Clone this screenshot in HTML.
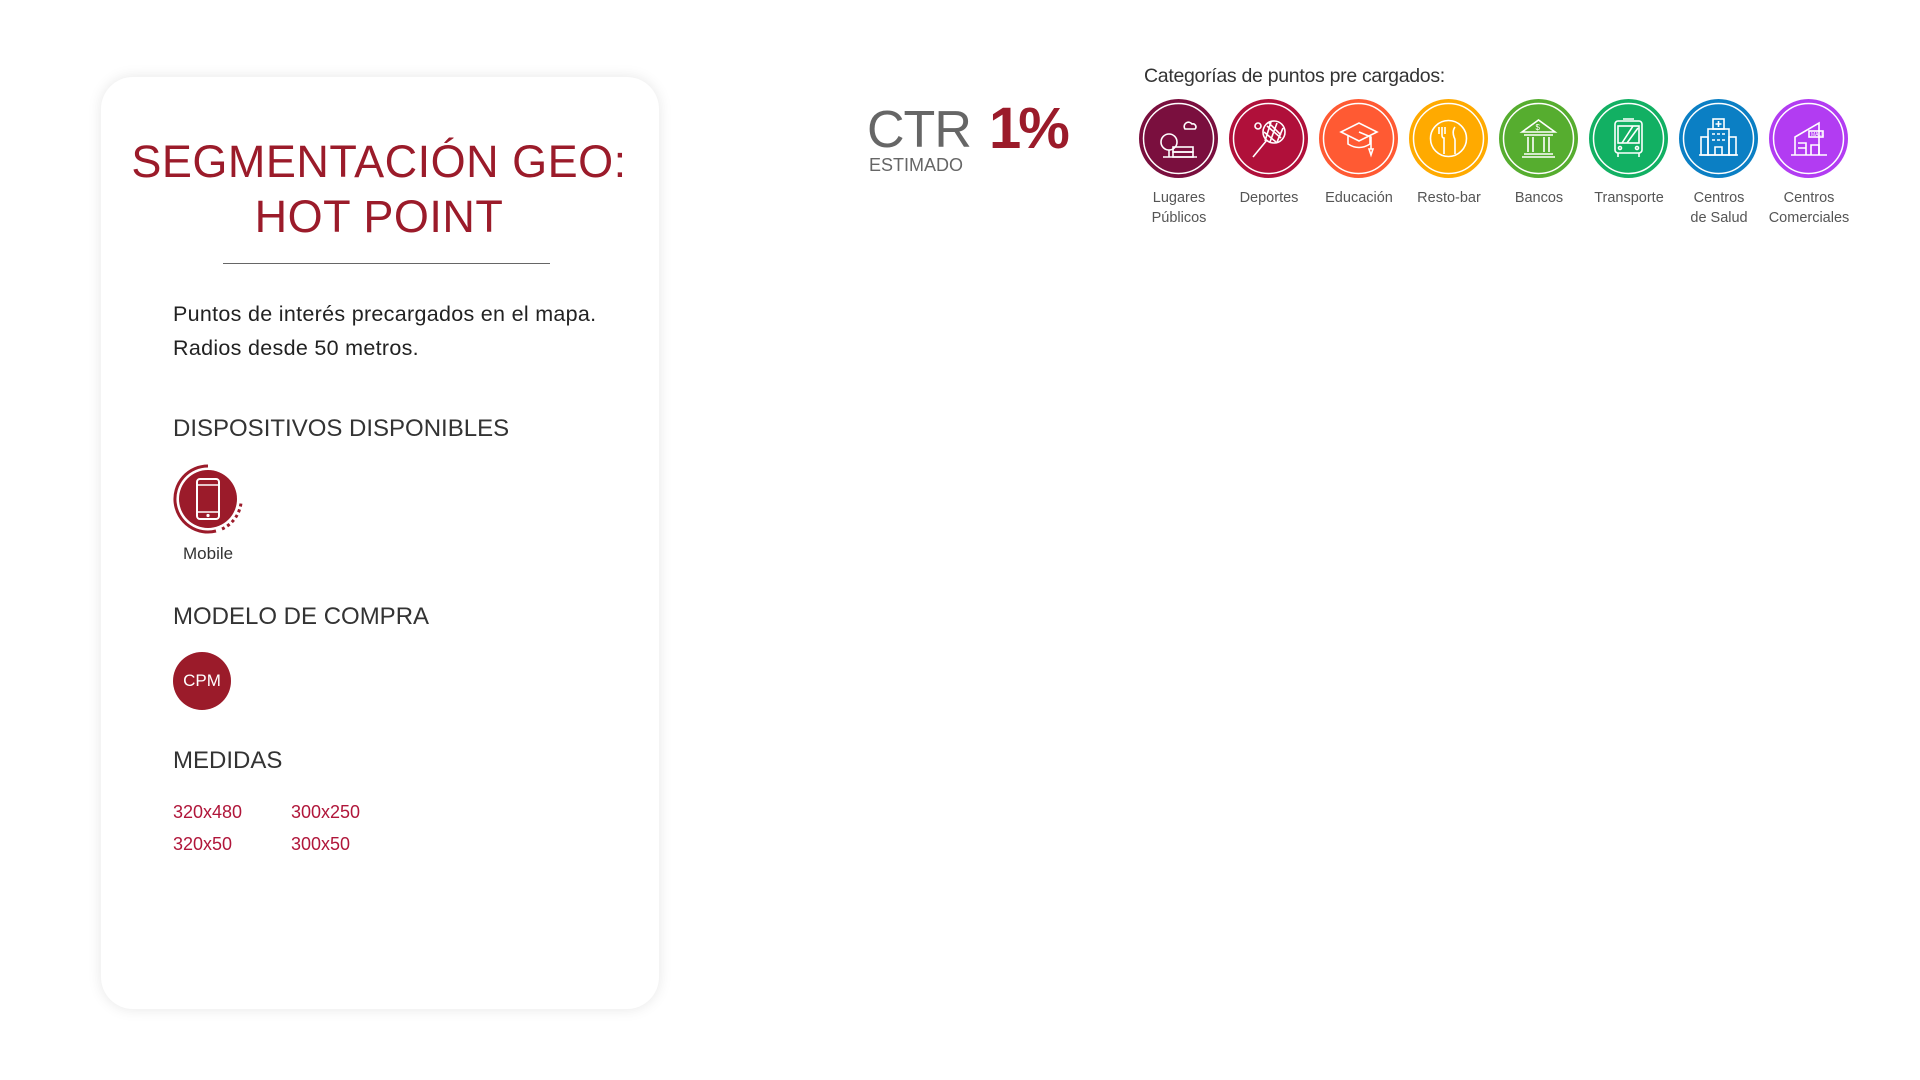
<!DOCTYPE html>
<html><head><meta charset="utf-8"><style>
*{margin:0;padding:0;box-sizing:border-box}
body{width:1920px;height:1080px;background:#fff;font-family:"Liberation Sans",sans-serif;position:relative;overflow:hidden}
.card{position:absolute;left:101px;top:77px;width:558px;height:932px;border-radius:32px;background:#fff;box-shadow:0 0 14px rgba(0,0,0,.10)}
.abs{position:absolute;white-space:nowrap}
.title{left:101px;width:556px;text-align:center;color:#9b1b2a;font-size:45px;letter-spacing:.5px}
.h{left:173px;color:#333;font-size:24px;font-weight:300;letter-spacing:0}
.sz{color:#b0163a;font-size:18px}
.cat{position:absolute;top:99px;width:79px;height:79px;border-radius:50%}
.cat svg{position:absolute;left:0;top:0}
.lbl{position:absolute;top:188px;width:110px;text-align:center;font-size:14.5px;color:#555;line-height:20px}
</style></head><body>
<div class="card"></div>
<div class="abs title" style="top:136px">SEGMENTACIÓN GEO:</div>
<div class="abs title" style="top:191px">HOT POINT</div>
<div class="abs" style="left:223px;top:263px;width:327px;height:1px;background:#666"></div>
<div class="abs" style="left:173px;top:297px;font-size:21.5px;color:#222;line-height:34px;letter-spacing:.3px">Puntos de interés precargados en el mapa.<br>Radios desde 50 metros.</div>
<div class="abs h" style="top:415px">DISPOSITIVOS DISPONIBLES</div>
<svg class="abs" style="left:170px;top:463px" width="80" height="80" viewBox="0 0 80 80">
<circle cx="38" cy="36" r="29" fill="#9b1b2a"/>
<path d="M38 3 A33 33 0 1 0 46 68" fill="none" stroke="#9b1b2a" stroke-width="3"/>
<path d="M52 66 A33 33 0 0 0 71 40" fill="none" stroke="#9b1b2a" stroke-width="3" stroke-dasharray="3 3"/>
<rect x="27" y="16" width="22" height="40" rx="3" fill="none" stroke="#fff" stroke-width="2"/>
<line x1="27" y1="22" x2="49" y2="22" stroke="#fff" stroke-width="1.5"/><line x1="27" y1="49" x2="49" y2="49" stroke="#fff" stroke-width="1.5"/>
<circle cx="38" cy="52.5" r="1.6" fill="#fff"/></svg>
<div class="abs" style="left:183px;top:544px;font-size:17px;color:#333">Mobile</div>
<div class="abs h" style="top:603px">MODELO DE COMPRA</div>
<div class="abs" style="left:173px;top:652px;width:58px;height:58px;border-radius:50%;background:#9b1b2a;color:#fff;font-size:17px;text-align:center;line-height:58px">CPM</div>
<div class="abs h" style="top:747px">MEDIDAS</div>
<div class="abs sz" style="left:173px;top:802px">320x480</div>
<div class="abs sz" style="left:291px;top:802px">300x250</div>
<div class="abs sz" style="left:173px;top:834px">320x50</div>
<div class="abs sz" style="left:291px;top:834px">300x50</div>

<div class="abs" style="left:867px;top:100px;font-size:52px;color:#666;letter-spacing:-1px">CTR</div>
<div class="abs" style="left:989px;top:95px;font-size:58px;color:#9b1b2a;font-weight:bold;letter-spacing:-3px">1%</div>
<div class="abs" style="left:869px;top:155px;font-size:18px;color:#666">ESTIMADO</div>
<div class="abs" style="left:1144px;top:65px;font-size:19.5px;color:#333;letter-spacing:-.3px">Categorías de puntos pre cargados:</div>

<div class="cat" style="left:1139px;background:#7a0f3e"><svg width="79" height="79"><circle cx="39.5" cy="39.5" r="35" fill="none" stroke="#fff" stroke-width="1.5"/><g fill="none" stroke="#fff" stroke-width="1.6"><circle cx="30" cy="43" r="8"/><line x1="30" y1="51" x2="30" y2="58"/><rect x="34" y="48" width="20" height="5"/><rect x="34" y="53" width="20" height="5"/><path d="M46 30 h10 a3 3 0 0 0 -3 -5 a4 4 0 0 0 -7 5z"/><path d="M24 58 h34"/></g></svg></div>
<div class="cat" style="left:1229px;background:#b0103a"><svg width="79" height="79"><circle cx="39.5" cy="39.5" r="35" fill="none" stroke="#fff" stroke-width="1.5"/><g fill="none" stroke="#fff" stroke-width="1.6"><circle cx="45" cy="33" r="11"/><path d="M38 41 L24 58"/><path d="M38 27 l14 12 M40 24 l12 12 M35 33 l12 10 M42 23 l-6 19 M48 24 l-7 19 M54 29 l-6 14"/><circle cx="29" cy="27" r="3"/></g></svg></div>
<div class="cat" style="left:1319px;background:#ff5a33"><svg width="79" height="79"><circle cx="39.5" cy="39.5" r="35" fill="none" stroke="#fff" stroke-width="1.5"/><g fill="none" stroke="#fff" stroke-width="1.6"><path d="M22 33 L40 24 L58 33 L40 42Z"/><path d="M29 37 v8 q11 7 22 0 v-8"/><path d="M40 33 L52 38 v12"/><path d="M50 50 l2 6 l2 -6z"/></g></svg></div>
<div class="cat" style="left:1409px;background:#ffaa00"><svg width="79" height="79"><circle cx="39.5" cy="39.5" r="35" fill="none" stroke="#fff" stroke-width="1.5"/><g fill="none" stroke="#fff" stroke-width="1.6"><circle cx="39.5" cy="39.5" r="18"/><path d="M33 28 v8 q0 3 2 3 v16 M30 28 v7 M36 28 v7"/><path d="M46 28 q-3 4 -1 10 q1 2 1 3 v14"/></g></svg></div>
<div class="cat" style="left:1499px;background:#56ad2f"><svg width="79" height="79"><circle cx="39.5" cy="39.5" r="35" fill="none" stroke="#fff" stroke-width="1.5"/><g fill="none" stroke="#fff" stroke-width="1.6"><path d="M23 33 L39.5 21 L56 33Z"/><path d="M25 36 h29 M25 55 h29 M23 58 h33"/><path d="M29 38 v15 M34 38 v15 M45 38 v15 M50 38 v15"/><text x="36.5" y="31" font-size="8" fill="#fff" stroke="none" font-family="Liberation Sans">$</text></g></svg></div>
<div class="cat" style="left:1589px;background:#12b063"><svg width="79" height="79"><circle cx="39.5" cy="39.5" r="35" fill="none" stroke="#fff" stroke-width="1.5"/><g fill="none" stroke="#fff" stroke-width="1.6"><rect x="26" y="22" width="27" height="32" rx="3"/><rect x="29" y="27" width="21" height="17"/><path d="M33 44 L44 27 M38 44 L49 29"/><circle cx="31" cy="49" r="1.5"/><circle cx="48" cy="49" r="1.5"/><path d="M29 54 v4 M50 54 v4 M34 20 h11"/></g></svg></div>
<div class="cat" style="left:1679px;background:#0b7fc4"><svg width="79" height="79"><circle cx="39.5" cy="39.5" r="35" fill="none" stroke="#fff" stroke-width="1.5"/><g fill="none" stroke="#fff" stroke-width="1.6"><rect x="34" y="20" width="11" height="10"/><path d="M39.5 22 v6 M36.5 25 h6"/><rect x="29" y="30" width="21" height="26"/><rect x="22" y="38" width="7" height="18"/><rect x="50" y="38" width="7" height="18"/><path d="M33 35 h3 M38 35 h3 M43 35 h3 M33 41 h3 M38 41 h3 M43 41 h3 M36 56 v-8 h7 v8 M20 56 h39"/></g></svg></div>
<div class="cat" style="left:1769px;background:#b23cf2"><svg width="79" height="79"><circle cx="39.5" cy="39.5" r="35" fill="none" stroke="#fff" stroke-width="1.5"/><g fill="none" stroke="#fff" stroke-width="1.6"><path d="M26 56 V38 L50 24 V56"/><rect x="40" y="32" width="14" height="6"/><path d="M29 44 h8 v12 M29 49 h8 M42 56 v-10 h8 v10 M22 56 h36"/></g><text x="42" y="37" font-size="5" fill="#fff" font-family="Liberation Sans">MALL</text></svg></div>

<div class="lbl" style="left:1124px">Lugares<br>Públicos</div>
<div class="lbl" style="left:1214px">Deportes</div>
<div class="lbl" style="left:1304px">Educación</div>
<div class="lbl" style="left:1394px">Resto-bar</div>
<div class="lbl" style="left:1484px">Bancos</div>
<div class="lbl" style="left:1574px">Transporte</div>
<div class="lbl" style="left:1664px">Centros<br>de Salud</div>
<div class="lbl" style="left:1754px">Centros<br>Comerciales</div>
</body></html>
